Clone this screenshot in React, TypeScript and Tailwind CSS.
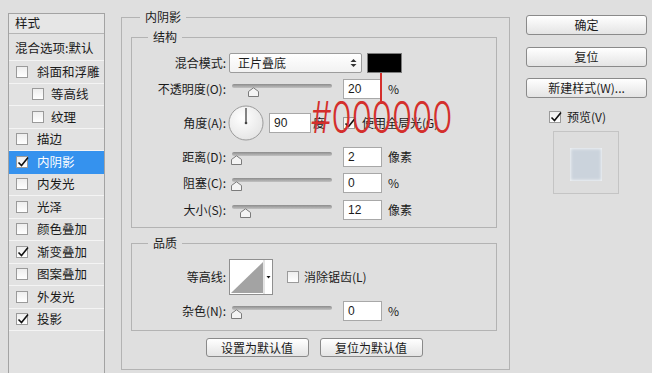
import React from "react";

type Item = { t: string; c?: boolean; i?: boolean; sel?: boolean };

const items: Item[] = [
  { t: "斜面和浮雕" },
  { t: "等高线", i: true },
  { t: "纹理", i: true },
  { t: "描边" },
  { t: "内阴影", c: true, sel: true },
  { t: "内发光" },
  { t: "光泽" },
  { t: "颜色叠加" },
  { t: "渐变叠加", c: true },
  { t: "图案叠加" },
  { t: "外发光" },
  { t: "投影", c: true },
];

function Check({ checked, className = "" }: { checked?: boolean; className?: string }) {
  return (
    <span
      className={`relative flex h-[12px] w-[12px] shrink-0 items-center justify-center border border-[#9a9a9a] bg-linear-to-b from-[#eeeeee] to-[#ffffff] ${className}`}
    >
      {checked && (
        <svg width="12" height="12" viewBox="0 0 12 12" className="absolute left-[0px] top-[-1px] overflow-visible">
          <path d="M1.5 6.5 L4.5 9.5 L11 1.5" fill="none" stroke="#111" strokeWidth="1.6" />
        </svg>
      )}
    </span>
  );
}

function LeftPanel() {
  return (
    <div className="mt-[13px] h-[370px] w-[97px] shrink-0 border border-[#a3a3a3] bg-[#e2e2e2] text-[12.5px]">
      <div className="flex h-[20px] items-center border-b border-[#b5b5b5] bg-[#e6e6e6] pl-[6px] leading-none">样式</div>
      <div className="flex h-[27px] items-center border-b border-[#f4f4f4] pl-[6px] pt-[3px] leading-none">混合选项:默认</div>
      {items.map((it) => (
        <div
          key={it.t}
          className={`flex h-[22.5px] items-center border-b leading-none ${
            it.sel ? "border-[#3592ee] bg-[#3592ee] text-white" : "border-[#f4f4f4]"
          } ${it.i ? "pl-[23px]" : "pl-[7px]"}`}
        >
          <Check checked={it.c} />
          <span className={it.i ? "ml-[7px]" : "ml-[9px]"}>{it.t}</span>
        </div>
      ))}
    </div>
  );
}

function Label({ children }: { children: React.ReactNode }) {
  return <div className="w-[94px] shrink-0 text-right leading-[20px]">{children}</div>;
}

function Slider({ pos }: { pos: number }) {
  return (
    <div className="relative ml-[6px] h-[20px] w-[100px] shrink-0">
      <div className="absolute left-0 right-0 top-[5px] h-[4px] rounded-full bg-linear-to-b from-[#8c8c8c] to-[#c2c2c2]" />
      <svg width="11" height="10" viewBox="0 0 11 10" className="absolute top-[8px]" style={{ left: pos }}>
        <path d="M0.5 9.5 L0.5 4.5 L5.5 0.8 L10.5 4.5 L10.5 9.5 Z" fill="#f4f4f4" stroke="#7b7b7b" strokeWidth="1" />
      </svg>
    </div>
  );
}

function Input({ v }: { v: string }) {
  return (
    <div className="ml-[11px] flex h-[20px] w-[39px] shrink-0 items-center border border-[#a8a8a8] bg-white pl-[4px] font-['Liberation_Sans',sans-serif] text-[12px] leading-none">
      {v}
    </div>
  );
}

function SliderRow({ label, pos, v, unit, mt }: { label: string; pos: number; v: string; unit: string; mt: string }) {
  return (
    <div className={`flex h-[20px] items-center ${mt}`}>
      <Label>{label}</Label>
      <Slider pos={pos} />
      <Input v={v} />
      <span className="ml-[6px] leading-none">{unit}</span>
    </div>
  );
}

function Dial() {
  return (
    <svg width="36" height="36" viewBox="0 0 36 36" className="ml-[2px] shrink-0">
      <defs>
        <radialGradient id="dg" cx="0.4" cy="0.35" r="0.7">
          <stop offset="0" stopColor="#ffffff" />
          <stop offset="1" stopColor="#e4e4e4" />
        </radialGradient>
      </defs>
      <circle cx="18" cy="18" r="17" fill="url(#dg)" stroke="#9a9a9a" strokeWidth="1" />
      <line x1="18" y1="18" x2="18" y2="3" stroke="#444" strokeWidth="1.3" />
      <circle cx="18" cy="18" r="1.3" fill="#444" />
    </svg>
  );
}

function Btn({ children, className = "" }: { children: React.ReactNode; className?: string }) {
  return (
    <div
      className={`flex items-center justify-center rounded-[3px] border border-[#8a8a8a] bg-linear-to-b from-[#ffffff] to-[#e4e4e4] leading-none ${className}`}
    >
      {children}
    </div>
  );
}

function Middle() {
  return (
    <fieldset className="ml-[16px] mt-[9px] h-[361px] w-[389px] shrink-0 border border-[#b3b3b3] pl-[9px] pt-[4px]">
      <legend className="ml-[9px] px-[5px] leading-[16px]">内阴影</legend>

      <fieldset className="w-[366px] border border-[#b3b3b3] pb-[7px] pt-[8px]">
        <legend className="ml-[16px] px-[5px] leading-[16px]">结构</legend>

        <div className="flex h-[20px] items-center">
          <Label>混合模式:</Label>
          <div className="ml-[3px] flex h-[20px] w-[133px] shrink-0 items-center justify-between rounded-[2px] border border-[#9c9c9c] bg-linear-to-b from-[#ffffff] to-[#f2f2f2] pl-[8px] pr-[4px] leading-none">
            <span>正片叠底</span>
            <svg width="7" height="10" viewBox="0 0 7 10">
              <path d="M0.5 4 L3.5 1 L6.5 4 Z" fill="#333" />
              <path d="M0.5 6 L3.5 9 L6.5 6 Z" fill="#333" />
            </svg>
          </div>
          <div className="ml-[5px] h-[20px] w-[35px] shrink-0 border border-[#7d7d7d] bg-black" />
        </div>

        <SliderRow label="不透明度(O):" pos={16} v="20" unit="%" mt="mt-[6px]" />

        <div className="mt-[6px] flex h-[35px] items-center">
          <Label>角度(A):</Label>
          <Dial />
          <div className="ml-[5px] flex h-[20px] w-[42px] shrink-0 items-center border border-[#a8a8a8] bg-white pl-[4px] font-['Liberation_Sans',sans-serif] leading-none">
            90
          </div>
          <span className="ml-[2px] leading-none">度</span>
          <Check checked className="ml-[18px]" />
          <span className="ml-[7px] leading-none">使用全局光(G)</span>
        </div>

        <SliderRow label="距离(D):" pos={-1} v="2" unit="像素" mt="mt-[7px]" />
        <SliderRow label="阻塞(C):" pos={-1} v="0" unit="%" mt="mt-[6px]" />
        <SliderRow label="大小(S):" pos={8} v="12" unit="像素" mt="mt-[7px]" />
      </fieldset>

      <fieldset className="mt-[7px] w-[366px] border border-[#b3b3b3] pb-[9px] pt-[8px]">
        <legend className="ml-[16px] px-[5px] leading-[16px]">品质</legend>
        <div className="flex h-[36px] items-center">
          <Label>等高线:</Label>
          <svg width="44" height="36" viewBox="0 0 44 36" className="ml-[3px] shrink-0">
            <rect x="0.5" y="0.5" width="43" height="35" fill="#ffffff" stroke="#8f8f8f" />
            <path d="M2 34 L34 3 L34 34 Z" fill="#a3a3a3" />
            <line x1="35" y1="1" x2="35" y2="35" stroke="#c8c8c8" />
            <path d="M37.5 17 L41.5 17 L39.5 19.5 Z" fill="#111" />
          </svg>
          <Check className="ml-[14px]" />
          <span className="ml-[5px] leading-none">消除锯齿(L)</span>
        </div>
        <SliderRow label="杂色(N):" pos={-1} v="0" unit="%" mt="mt-[6px]" />
      </fieldset>

      <div className="mt-[7px] flex w-[366px] justify-center gap-[11px]">
        <Btn className="h-[19px] w-[103px]">设置为默认值</Btn>
        <Btn className="h-[19px] w-[103px]">复位为默认值</Btn>
      </div>
    </fieldset>
  );
}

function Right() {
  return (
    <div className="ml-[16px] flex w-[121px] shrink-0 flex-col pt-[15px]">
      <Btn className="h-[20px] border-[#5a5a5a]">确定</Btn>
      <Btn className="mt-[12px] h-[20px]">复位</Btn>
      <Btn className="mt-[11px] h-[20px]">新建样式(W)...</Btn>
      <div className="mt-[13px] flex h-[12px] items-center pl-[23px]">
        <Check checked />
        <span className="ml-[6px] leading-none">预览(V)</span>
      </div>
      <div className="ml-[27px] mt-[8px] flex h-[63px] w-[66px] items-center justify-center border border-[#c4c4c4] bg-[#dddddd] pt-[4px]">
        <div className="h-[33px] w-[32px] bg-[#cbd3dc] shadow-[inset_0_0_3px_1px_#eef1f4]" />
      </div>
    </div>
  );
}

export default function App() {
  return (
    <div className="relative flex h-[373px] w-[652px] overflow-hidden bg-[#dfdfdf] pl-[8px] font-['Noto_Sans_CJK_SC',sans-serif] text-[12px] text-[#1b1b1b]">
      <LeftPanel />
      <Middle />
      <Right />
      <div className="absolute left-[380px] top-[73px] h-[31px] w-[2px] bg-[#d42f2c]" />
      <div className="absolute left-[311px] top-[95px] origin-left scale-x-[0.74] whitespace-nowrap font-['Inter',sans-serif] text-[44px] font-light leading-[44px] text-[#d42f2c]">
        #000000
      </div>
    </div>
  );
}
